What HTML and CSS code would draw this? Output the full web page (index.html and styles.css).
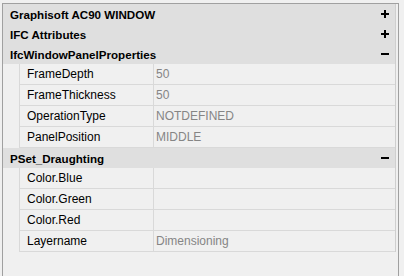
FILE: index.html
```html
<!DOCTYPE html>
<html lang="en">
<head>
    <meta charset="UTF-8">
    <meta name="viewport" content="width=device-width, initial-scale=1.0">
    <title>IFC Properties</title>
    <link rel="stylesheet" href="styles.css">
</head>
<body>
    <div class="panel">
        <div class="grid">
            <div class="group-header">
                <span>Graphisoft AC90 WINDOW</span>
                <svg class="toggle" width="8" height="8" viewBox="0 0 8 8"><rect x="0" y="3" width="8" height="2"/><rect x="3" y="0" width="2" height="8"/></svg>
            </div>
            <div class="group-header">
                <span>IFC Attributes</span>
                <svg class="toggle" width="8" height="8" viewBox="0 0 8 8"><rect x="0" y="3" width="8" height="2"/><rect x="3" y="0" width="2" height="8"/></svg>
            </div>
            <div class="group-header">
                <span>IfcWindowPanelProperties</span>
                <svg class="toggle" width="8" height="8" viewBox="0 0 8 8"><rect x="0" y="3" width="8" height="2"/></svg>
            </div>
            <div class="prop-row">
                <div class="indent"></div>
                <div class="cells">
                    <div class="prop-name">FrameDepth</div>
                    <div class="prop-value">50</div>
                </div>
            </div>
            <div class="prop-row">
                <div class="indent"></div>
                <div class="cells">
                    <div class="prop-name">FrameThickness</div>
                    <div class="prop-value">50</div>
                </div>
            </div>
            <div class="prop-row">
                <div class="indent"></div>
                <div class="cells">
                    <div class="prop-name">OperationType</div>
                    <div class="prop-value">NOTDEFINED</div>
                </div>
            </div>
            <div class="prop-row">
                <div class="indent"></div>
                <div class="cells">
                    <div class="prop-name">PanelPosition</div>
                    <div class="prop-value">MIDDLE</div>
                </div>
            </div>
            <div class="group-header">
                <span>PSet_Draughting</span>
                <svg class="toggle" width="8" height="8" viewBox="0 0 8 8"><rect x="0" y="3" width="8" height="2"/></svg>
            </div>
            <div class="prop-row">
                <div class="indent"></div>
                <div class="cells">
                    <div class="prop-name">Color.Blue</div>
                    <div class="prop-value"></div>
                </div>
            </div>
            <div class="prop-row">
                <div class="indent"></div>
                <div class="cells">
                    <div class="prop-name">Color.Green</div>
                    <div class="prop-value"></div>
                </div>
            </div>
            <div class="prop-row">
                <div class="indent"></div>
                <div class="cells">
                    <div class="prop-name">Color.Red</div>
                    <div class="prop-value"></div>
                </div>
            </div>
            <div class="prop-row">
                <div class="indent"></div>
                <div class="cells">
                    <div class="prop-name">Layername</div>
                    <div class="prop-value">Dimensioning</div>
                </div>
            </div>
        </div>
    </div>
</body>
</html>
```

FILE: styles.css
```css
:root {
    --background: #f0f0f0;
    --header-bg: #dfdfdf;
    --border-dark: #a0a0a0;
    --border-light: #d9d9d9;
    --text-dark: #000000;
    --text-muted: #858585;
}

* {
    margin: 0;
    padding: 0;
    box-sizing: border-box;
}

body {
    background: var(--background);
    font-family: "Liberation Sans", Arial, sans-serif;
    font-size: 12px;
    color: var(--text-dark);
}

.panel {
    margin: 3px 0 0 2px;
    width: 397px;
    height: 273px;
    border: 1px solid var(--border-dark);
    border-bottom: none;
}

.grid {
    width: 393px;
    border-right: 1px solid #cfcfcf;
}

.group-header {
    display: flex;
    justify-content: space-between;
    align-items: center;
    height: 20px;
    padding: 0 6px 0 7px;
    background: var(--header-bg);
    font-weight: bold;
    font-size: 11.6px;
}

.toggle {
    display: block;
    fill: #000;
}

.prop-row {
    display: flex;
    height: 21px;
}

.indent {
    width: 16px;
    flex-shrink: 0;
}

.cells {
    flex: 1;
    display: flex;
    border-left: 1px solid var(--border-light);
    border-bottom: 1px solid var(--border-light);
    line-height: 20px;
}

.prop-name {
    width: 134px;
    padding-left: 7px;
    border-right: 1px solid var(--border-light);
}

.prop-value {
    flex: 1;
    padding-left: 2px;
    color: var(--text-muted);
}
```
